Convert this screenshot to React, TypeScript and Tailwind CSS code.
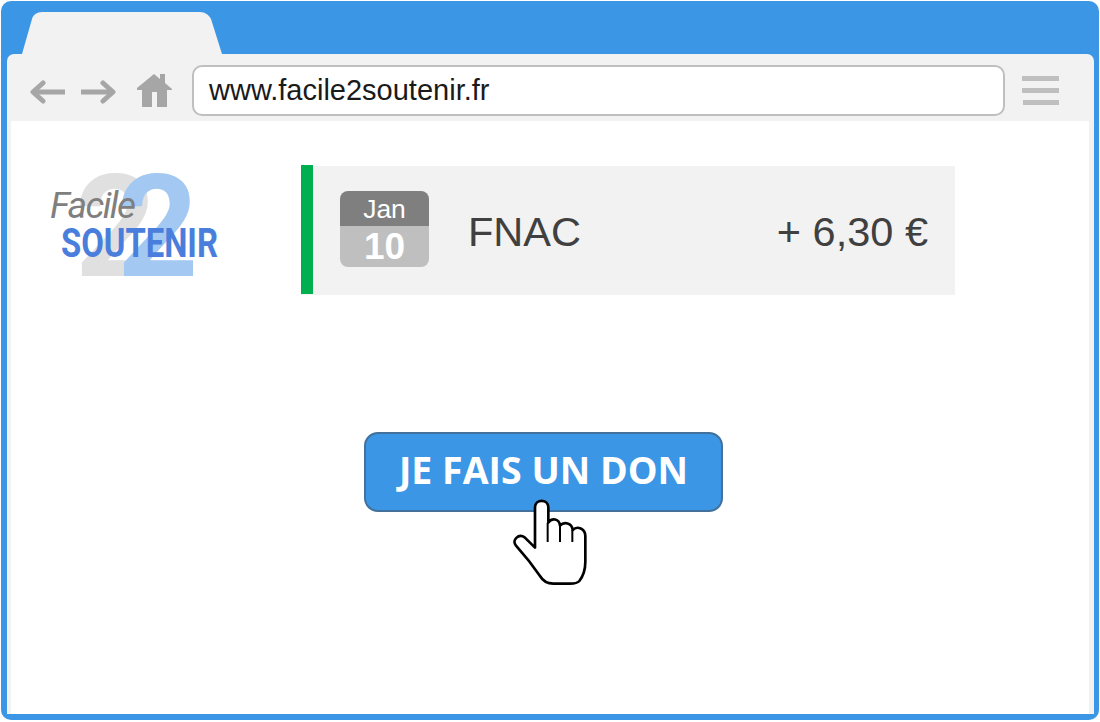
const Hand = () => (
  <svg
    viewBox="0 0 360 345"
    className="absolute left-[126px] top-[48px] w-[120px] h-[115px]"
    fill="none"
  >
    <path
      d="M135 203V82C135 56 175 56 175 82V128C185 112 208 116 210 137C222 124 246 128 248 150C262 136 286 146 286 168V245C286 275 278 290 268 303C262 310 250 311 240 311H190C172 311 160 305 150 288C128 256 104 226 78 197C64 180 86 160 104 172L135 203Z"
      fill="#fff"
      stroke="#000"
      strokeWidth="8"
      strokeLinejoin="round"
    />
    <path d="M173 128V186M210 137V186M247 150V186" stroke="#000" strokeWidth="6" />
  </svg>
);

const Logo = () => (
  <div className="relative w-[180px] h-[120px] shrink-0 font-['Roboto',sans-serif]">
    <span className="absolute left-[27px] top-[-27px] text-[142px] leading-[180px] font-bold text-[#e0e0e0]">2</span>
    <span className="absolute left-[69px] top-[-27px] text-[142px] leading-[180px] font-bold text-[#a3c8f2]">2</span>
    <span className="absolute left-[2px] top-[20px] text-[37px] leading-[42px] italic text-[#7f7f7f] tracking-[-1.6px]">Facile</span>
    <span className="absolute left-[13px] top-[58px] text-[40px] leading-[42px] font-bold text-[#4a7edc] scale-x-[0.82] origin-left whitespace-nowrap">SOUTENIR</span>
  </div>
);

export default function App() {
  return (
    <div className="w-[1100px] h-[722px] bg-white p-px font-['Liberation_Sans',Arial,sans-serif]">
      <div className="w-[1098px] h-[719px] bg-[#3c96e6] rounded-[10px] flex flex-col pl-[6px] pr-[5px] pb-[6px]">
        <div className="h-[53px] shrink-0 flex items-end pl-[15px]">
          <svg viewBox="0 0 200 42" className="w-[200px] h-[42px] block">
            <path d="M0 42L10 7C11 3 15 0 20 0H178C183 0 187 3 189 7L200 42Z" fill="#f2f2f2" />
          </svg>
        </div>
        <div className="flex-1 bg-[#f2f2f2] rounded-tl-[7px] rounded-tr-[7px] flex flex-col">
          <div className="h-[67px] shrink-0 flex items-start pt-[11px]">
            <div className="flex items-center pl-[23px] w-[185px] h-[51px] shrink-0">
              <svg viewBox="0 0 36 24" className="w-[36px] h-[24px] shrink-0 mt-[3px]" fill="none" stroke="#a6a6a6" strokeWidth="5" strokeLinecap="round" strokeLinejoin="round">
                <path d="M13 3L3 12L13 21" />
                <path d="M3 12H35" strokeLinecap="butt" />
              </svg>
              <svg viewBox="0 0 36 24" className="w-[36px] h-[24px] shrink-0 mt-[3px] ml-[14px]" fill="none" stroke="#a6a6a6" strokeWidth="5" strokeLinecap="round" strokeLinejoin="round">
                <path d="M23 3L33 12L23 21" />
                <path d="M1 12H33" strokeLinecap="butt" />
              </svg>
              <svg viewBox="0 0 36 34" className="w-[36px] h-[34px] shrink-0 ml-[21px]" fill="#a6a6a6">
                <path d="M0 14L17 0L23 5V0H28V9L35 15V16H30V33H20V18H15V33H5V16H0Z" />
              </svg>
            </div>
            <div className="w-[813px] h-[51px] bg-white border-2 border-[#bfbfbf] rounded-[10px] flex items-center pl-[15px] text-[29px] text-[#1a1a1a] shrink-0">
              www.facile2soutenir.fr
            </div>
            <div className="flex flex-col gap-[7px] ml-[17px] w-[37px] mt-[11px]">
              <div className="h-[5px] bg-[#bfbfbf]" />
              <div className="h-[5px] bg-[#bfbfbf]" />
              <div className="h-[5px] bg-[#bfbfbf] ml-px" />
            </div>
          </div>
          <div className="flex-1 bg-white ml-[4px] mr-[5px] flex flex-col">
            <div className="flex pt-[45px] pl-[37px]">
              <div className="-mt-px">
                <Logo />
              </div>
              <div className="ml-[73px] w-[654px] h-[129px] bg-[#f2f2f2] flex items-center">
                <div className="w-[12px] h-[129px] bg-[#00b050] -mt-[2px] shrink-0" />
                <div className="ml-[27px] w-[89px] h-[76px] -mt-[3px] rounded-[8px] overflow-hidden flex flex-col text-white text-center shrink-0">
                  <div className="h-[35px] bg-[#7f7f7f] text-[26.5px] leading-[37px]">Jan</div>
                  <div className="flex-1 bg-[#bfbfbf] text-[37px] leading-[41px] font-bold">10</div>
                </div>
                <div className="ml-[39px] pt-[4px] text-[41.5px] text-[#404040]">FNAC</div>
                <div className="ml-auto pt-[3px] mr-[27px] text-[41.5px] text-[#404040]">+ 6,30 €</div>
              </div>
            </div>
            <div className="pl-[353px] pt-[137px]">
              <div className="relative w-[359px] h-[80px]">
                <div className="w-full h-full bg-[#3c96e6] border-2 border-[#41719c] rounded-[14px] flex items-center justify-center pb-[3px] text-white text-[37.5px] font-bold font-['Open_Sans',sans-serif]">
                  JE FAIS UN DON
                </div>
                <Hand />
              </div>
            </div>
          </div>
        </div>
      </div>
    </div>
  );
}
